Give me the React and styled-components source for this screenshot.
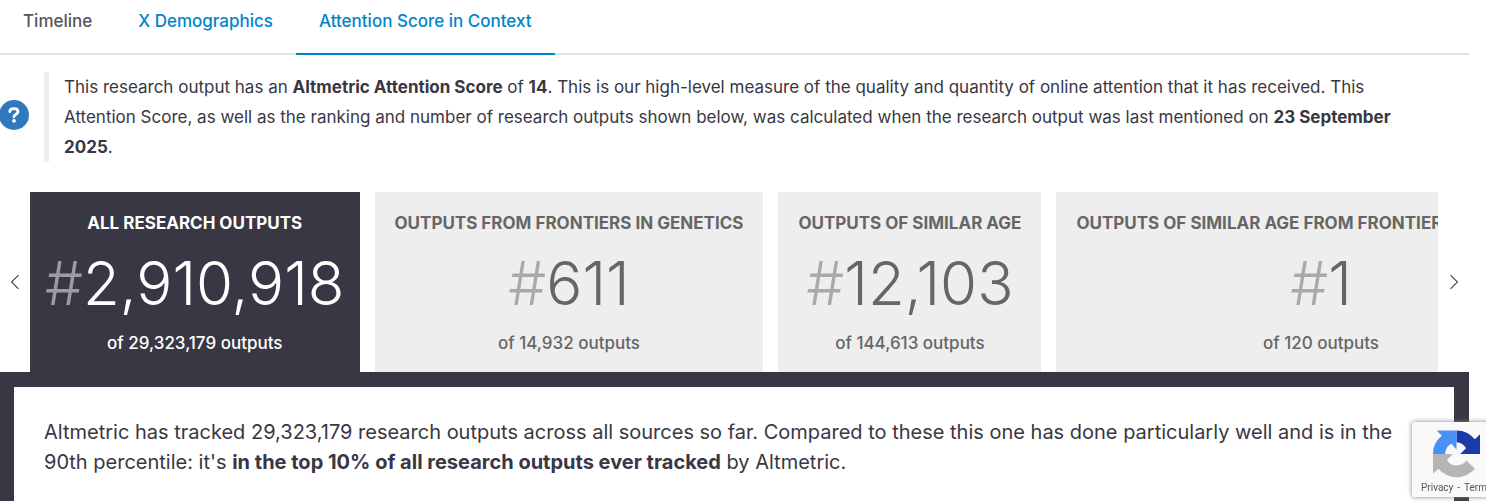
import React, { useState } from 'react';
import styled, { createGlobalStyle, ThemeProvider } from 'styled-components';

const theme = {
  colors: {
    text: '#383743',
    textMuted: '#666666',
    tabText: '#55545c',
    link: '#0085c8',
    dark: '#383743',
    card: '#eeeeee',
    line: '#e2e2e2',
    help: '#3178be',
  },
};

const GlobalStyle = createGlobalStyle`
  * {
    box-sizing: border-box;
  }

  body {
    margin: 0;
    background: #fff;
    color: ${(props) => props.theme.colors.text};
    font-family: Inter, 'Liberation Sans', sans-serif;
    font-size: 17px;
    line-height: 30px;
    overflow-x: hidden;
  }

  #root {
    overflow: hidden;
  }

  button {
    font: inherit;
    margin: 0;
    border: 0;
    cursor: pointer;
  }

  p {
    margin: 0;
  }
`;

const Page = styled.main`
  margin-right: 17px;
`;

const Tabs = styled.nav`
  display: flex;
  height: 55px;
  border-bottom: 2px solid ${(props) => props.theme.colors.line};
`;

const Tab = styled.a`
  height: 55px;
  padding: 6px 23px 0;
  color: ${(props) => (props.$muted ? props.theme.colors.tabText : props.theme.colors.link)};
  border-bottom: 2px solid ${(props) => (props.$active ? props.theme.colors.link : 'transparent')};
  font-weight: 500;
  text-decoration: none;
  white-space: nowrap;
`;

const Intro = styled.section`
  display: flex;
  align-items: center;
  margin: 17px 0 30px;
`;

const HelpButton = styled.button`
  flex: none;
  width: 30px;
  height: 30px;
  margin: 0 15px 4px -1px;
  padding: 0;
  border-radius: 50%;
  background: ${(props) => props.theme.colors.help};

  svg {
    display: block;
  }
`;

const IntroText = styled.p`
  flex: 1;
  padding: 0 38px 0 15px;
  border-left: 5px solid ${(props) => props.theme.colors.card};
`;

const Carousel = styled.section`
  display: flex;
`;

const ArrowButton = styled.button`
  flex: none;
  display: flex;
  align-items: center;
  justify-content: center;
  width: ${(props) => props.$width}px;
  padding: 0;
  background: none;
  color: #444;
`;

const CardList = styled.div`
  flex: 1;
  min-width: 0;
  display: flex;
  gap: 15px;
  overflow: hidden;
`;

const Card = styled.button`
  flex: none;
  display: flex;
  flex-direction: column;
  align-items: center;
  height: 180px;
  padding: 16px 15px 14px;
  background: ${(props) => (props.$active ? props.theme.colors.dark : props.theme.colors.card)};
  color: ${(props) => (props.$active ? '#fff' : props.theme.colors.textMuted)};
  white-space: nowrap;
`;

const CardTitle = styled.span`
  padding: 0 5px;
  font-weight: 700;
  text-transform: uppercase;
`;

const Rank = styled.span`
  font-size: 60px;
  font-weight: 300;
  line-height: 90px;
`;

const Hash = styled.span`
  opacity: 0.5;
`;

const CardTotal = styled.span`
  font-weight: 500;
`;

const Summary = styled.section`
  padding: 30px 30px 24px;
  border: 15px solid ${(props) => props.theme.colors.dark};
  border-left-width: 14px;
  border-bottom: 0;
  font-size: 20px;
`;

const Badge = styled.aside`
  position: fixed;
  right: -182px;
  bottom: 4px;
  width: 256px;
  height: 75px;
  padding: 8px 9px;
  border-radius: 2px;
  background: #f9f9f9;
  box-shadow: 0 0 5px #808080;
`;

const BadgeLogo = styled.svg`
  display: block;
  margin-left: 12px;
`;

const BadgeLinks = styled.div`
  display: flex;
  gap: 4px;
  color: #555;
  font: 10px/20px Roboto, sans-serif;

  a {
    color: inherit;
    text-decoration: none;
  }
`;

const cards = [
  { title: 'All research outputs', rank: '2,910,918', total: '29,323,179' },
  { title: 'Outputs from Frontiers in Genetics', rank: '611', total: '14,932' },
  { title: 'Outputs of similar age', rank: '12,103', total: '144,613' },
  { title: 'Outputs of similar age from Frontiers in Genetics', rank: '1', total: '120' },
];

function Chevron({ direction }) {
  return (
    <svg width="10" height="16" viewBox="0 0 10 16" fill="none" stroke="currentColor" strokeWidth="1.1" aria-hidden="true">
      <path d={direction === 'left' ? 'M8.5 1.2 1.5 8l7 6.8' : 'M1.5 1.2 8.5 8l-7 6.8'} />
    </svg>
  );
}

function RecaptchaBadge() {
  return (
    <Badge>
      <BadgeLogo width="47" height="48" viewBox="0 0 64 64" aria-hidden="true">
        <path fill="#1c3aa9" d="M32 0a32 32 0 0 1 25 12l7-7v27H37l8-8c-3-5-7-7.500-13-8z" />
        <path fill="#4a90f5" d="M32 0v26l-7-8c-5 3-8 7-8.500 14H0a32 32 0 0 1 12-25L5 0z" />
        <path fill="#b5b5b5" d="M0 32h27l-8 8c3 5 7 7.500 13 7.500 6 0 10-2 13.500-6.500L57 52A32 32 0 0 1 7.500 52L0 59z" />
      </BadgeLogo>
      <BadgeLinks>
        <a href="#privacy">Privacy</a>
        <span>-</span>
        <a href="#terms">Terms</a>
      </BadgeLinks>
    </Badge>
  );
}

export default function App() {
  const [selected, setSelected] = useState(0);
  const move = (step) => setSelected((selected + step + cards.length) % cards.length);

  return (
    <ThemeProvider theme={theme}>
      <GlobalStyle />
      <Page>
        <Tabs>
          <Tab href="#timeline" $muted>Timeline</Tab>
          <Tab href="#demographics">X Demographics</Tab>
          <Tab href="#score" $active aria-current="page">Attention Score in Context</Tab>
        </Tabs>
        <Intro>
          <HelpButton type="button" aria-label="What is this?">
            <svg width="30" height="30" viewBox="0 0 30 30" fill="none" aria-hidden="true">
              <path d="M10.8 11.7c0-2 1.9-3 4.2-3s4 1.1 4 3c0 2.5-4 2.6-4 5.1" stroke="#fff" strokeWidth="2.8" strokeLinecap="round" />
              <circle cx="15" cy="20.8" r="1.9" fill="#fff" />
            </svg>
          </HelpButton>
          <IntroText>
            This research output has an <strong>Altmetric Attention Score</strong> of <strong>14</strong>.
            {' '}
            This is our high-level measure of the quality and quantity of online attention that it has received.
            {' '}
            This Attention Score, as well as the ranking and number of research outputs shown below, was calculated
            {' '}
            when the research output was last mentioned on <strong>23 September 2025</strong>.
          </IntroText>
        </Intro>
        <Carousel>
          <ArrowButton type="button" $width={30} aria-label="Previous" onClick={() => move(-1)}>
            <Chevron direction="left" />
          </ArrowButton>
          <CardList>
            {cards.map((card, index) => (
              <Card
                key={card.title}
                type="button"
                $active={index === selected}
                aria-pressed={index === selected}
                onClick={() => setSelected(index)}
              >
                <CardTitle>{card.title}</CardTitle>
                <Rank>
                  <Hash>#</Hash>
                  {card.rank}
                </Rank>
                <CardTotal>{`of ${card.total} outputs`}</CardTotal>
              </Card>
            ))}
          </CardList>
          <ArrowButton type="button" $width={31} aria-label="Next" onClick={() => move(1)}>
            <Chevron direction="right" />
          </ArrowButton>
        </Carousel>
        <Summary>
          <p>
            Altmetric has tracked 29,323,179 research outputs across all sources so far. Compared to these this one
            {' '}
            has done particularly well and is in the 90th percentile: it&apos;s
            {' '}
            <strong>in the top 10% of all research outputs ever tracked</strong> by Altmetric.
          </p>
        </Summary>
      </Page>
      <RecaptchaBadge />
    </ThemeProvider>
  );
}
